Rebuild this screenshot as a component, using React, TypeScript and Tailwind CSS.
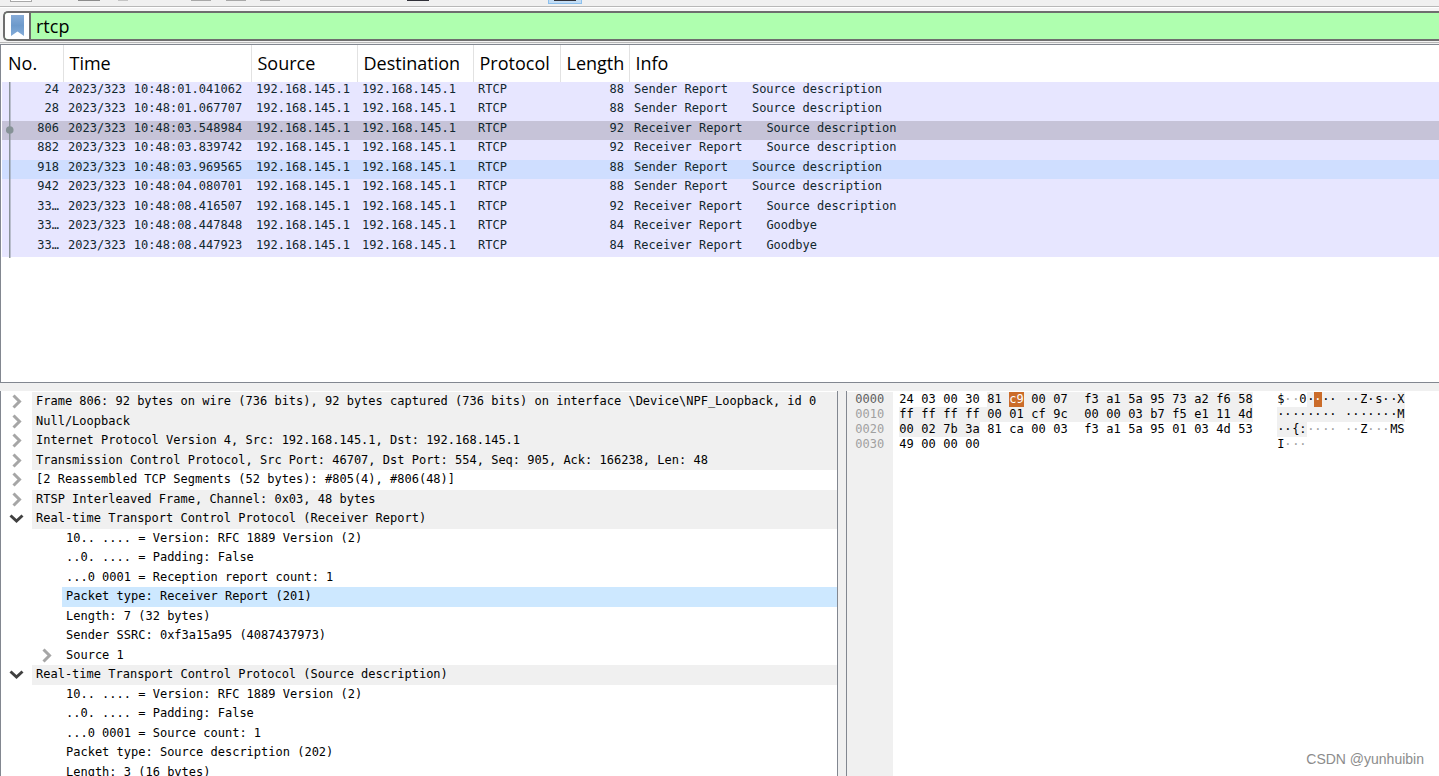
import clsx from 'clsx'

const columns = [
  { label: 'No.', width: 'w-[61px]' },
  { label: 'Time', width: 'w-[188px]' },
  { label: 'Source', width: 'w-[106px]' },
  { label: 'Destination', width: 'w-[116px]' },
  { label: 'Protocol', width: 'w-[87px]' },
  { label: 'Length', width: 'w-[69px]' },
  { label: 'Info', width: '' },
]

const packets = [
  { no: '24', time: '10:48:01.041062', length: 88, info: ['Sender Report', 'Source description'] },
  { no: '28', time: '10:48:01.067707', length: 88, info: ['Sender Report', 'Source description'] },
  { no: '806', time: '10:48:03.548984', length: 92, info: ['Receiver Report', 'Source description'], state: 'selected' },
  { no: '882', time: '10:48:03.839742', length: 92, info: ['Receiver Report', 'Source description'] },
  { no: '918', time: '10:48:03.969565', length: 88, info: ['Sender Report', 'Source description'], state: 'hover' },
  { no: '942', time: '10:48:04.080701', length: 88, info: ['Sender Report', 'Source description'] },
  { no: '33…', time: '10:48:08.416507', length: 92, info: ['Receiver Report', 'Source description'] },
  { no: '33…', time: '10:48:08.447848', length: 84, info: ['Receiver Report', 'Goodbye'] },
  { no: '33…', time: '10:48:08.447923', length: 84, info: ['Receiver Report', 'Goodbye'] },
]

type Node = { text: string; level: 0 | 1; arrow?: 'closed' | 'open'; tone?: 'gray' | 'blue' }

const nodes: Node[] = [
  { text: 'Frame 806: 92 bytes on wire (736 bits), 92 bytes captured (736 bits) on interface \\Device\\NPF_Loopback, id 0', level: 0, arrow: 'closed', tone: 'gray' },
  { text: 'Null/Loopback', level: 0, arrow: 'closed', tone: 'gray' },
  { text: 'Internet Protocol Version 4, Src: 192.168.145.1, Dst: 192.168.145.1', level: 0, arrow: 'closed', tone: 'gray' },
  { text: 'Transmission Control Protocol, Src Port: 46707, Dst Port: 554, Seq: 905, Ack: 166238, Len: 48', level: 0, arrow: 'closed', tone: 'gray' },
  { text: '[2 Reassembled TCP Segments (52 bytes): #805(4), #806(48)]', level: 0, arrow: 'closed' },
  { text: 'RTSP Interleaved Frame, Channel: 0x03, 48 bytes', level: 0, arrow: 'closed', tone: 'gray' },
  { text: 'Real-time Transport Control Protocol (Receiver Report)', level: 0, arrow: 'open', tone: 'gray' },
  { text: '10.. .... = Version: RFC 1889 Version (2)', level: 1 },
  { text: '..0. .... = Padding: False', level: 1 },
  { text: '...0 0001 = Reception report count: 1', level: 1 },
  { text: 'Packet type: Receiver Report (201)', level: 1, tone: 'blue' },
  { text: 'Length: 7 (32 bytes)', level: 1 },
  { text: 'Sender SSRC: 0xf3a15a95 (4087437973)', level: 1 },
  { text: 'Source 1', level: 1, arrow: 'closed' },
  { text: 'Real-time Transport Control Protocol (Source description)', level: 0, arrow: 'open', tone: 'gray' },
  { text: '10.. .... = Version: RFC 1889 Version (2)', level: 1 },
  { text: '..0. .... = Padding: False', level: 1 },
  { text: '...0 0001 = Source count: 1', level: 1 },
  { text: 'Packet type: Source description (202)', level: 1 },
  { text: 'Length: 3 (16 bytes)', level: 1 },
]

const offsets = ['0000', '0010', '0020', '0030']

// from/to bound the bytes that belong to the current protocol
const hexRows = [
  { bytes: '24 03 00 30 81 c9 00 07 f3 a1 5a 95 73 a2 f6 58', ascii: '$··0······Z·s··X', from: 4, to: 16, picked: 5 },
  { bytes: 'ff ff ff ff 00 01 cf 9c 00 00 03 b7 f5 e1 11 4d', ascii: '···············M', from: 0, to: 16, picked: -1 },
  { bytes: '00 02 7b 3a 81 ca 00 03 f3 a1 5a 95 01 03 4d 53', ascii: '··{:······Z···MS', from: 0, to: 4, picked: -1 },
  { bytes: '49 00 00 00', ascii: 'I···', from: 0, to: 0, picked: -1 },
]

const Arrow = ({ open }: { open: boolean }) =>
  open ? (
    <svg width="15" height="15" viewBox="0 0 15 15" fill="none" stroke="#404040" strokeWidth="3">
      <path d="M1.5 4.5 7.5 10 13.5 4.5" />
    </svg>
  ) : (
    <svg width="15" height="15" viewBox="0 0 15 15" fill="none" stroke="#a6a6a6" strokeWidth="3">
      <path d="M4.5 1.5 10.5 7.5 4.5 13.5" />
    </svg>
  )

const Toolbar = () => (
  <div className="flex h-[7px] shrink-0 items-start border-b border-[#b8b8b8] bg-[#f0f0f0]">
    <div className="ml-[10px] h-[2px] w-[22px] border-x border-b border-[#a8a8a8] bg-white" />
    <div className="ml-[46px] h-px w-[22px] bg-[#8c8c8c]" />
    <div className="ml-[18px] h-px w-[10px] bg-[#c4c4c4]" />
    <div className="ml-[63px] h-px w-5 bg-[#a8a8a8]" />
    <div className="ml-[15px] h-px w-5 bg-[#a8a8a8]" />
    <div className="ml-[14px] h-px w-5 bg-[#a8a8a8]" />
    <div className="ml-[127px] h-px w-[22px] bg-[#303038]" />
    <div className="ml-[119px] flex h-1 w-[34px] justify-center border-x border-b border-[#8cc0ee] bg-[#c2dcf3]">
      <div className="h-px w-[22px] bg-[#303038]" />
    </div>
  </div>
)

const FilterBar = () => (
  <div className="shrink-0 border-t border-b border-t-white border-b-[#b8b8b8] bg-[#f4f4f4] pt-[3px] pb-px pl-[3px]">
    <div className="flex h-[30px] rounded-l-[5px] border-y-2 border-l-2 border-t-[#6e6e6e] border-b-[#6e6e6e] border-l-[#6e6e6e] bg-[#afffaf]">
      <button type="button" aria-label="Filter bookmarks" className="flex w-[26px] shrink-0 items-center justify-center rounded-l-[3px] border-r-2 border-[#6e6e6e] bg-white">
        <svg width="13" height="22" viewBox="0 0 13 22">
          <defs>
            <linearGradient id="bookmark" x1="0" y1="0" x2="0" y2="1">
              <stop offset="0" stopColor="#86abd8" />
              <stop offset="0.5" stopColor="#6d9acb" />
              <stop offset="1" stopColor="#84acd9" />
            </linearGradient>
          </defs>
          <path d="M0 0H13V21L6.5 16.5 0 21Z" fill="url(#bookmark)" />
        </svg>
      </button>
      <input
        aria-label="Display filter"
        defaultValue="rtcp"
        className="min-w-0 flex-1 bg-transparent pl-[5px] font-['Open_Sans',sans-serif] text-[18px] leading-[26px] text-black outline-none"
      />
    </div>
  </div>
)

const PacketList = () => (
  <section className="relative min-h-0 flex-[337] overflow-hidden border-y border-l border-[#828790] bg-white pl-px">
    <table className="w-full table-fixed border-collapse">
      <thead>
        <tr className="h-[37px] font-['Open_Sans',sans-serif] text-[18px] text-black">
          {columns.map((c) => (
            <th key={c.label} className={clsx('overflow-hidden border-r border-[#e2e2e2] p-0 pl-[6px] text-left font-normal last:border-r-0', c.width)}>
              {c.label}
            </th>
          ))}
        </tr>
      </thead>
      <tbody className="font-['DejaVu_Sans_Mono',monospace] text-[12px] leading-[15px] whitespace-pre text-[#12272e]">
        {packets.map((p, i) => (
          <tr
            key={i}
            className={clsx(
              'align-top odd:h-[19px] even:h-[20px]',
              p.state === 'selected' ? 'bg-[#c6c3d8]' : p.state === 'hover' ? 'bg-[#cfdeff]' : 'bg-[#e7e6ff]',
            )}
          >
            <td className="p-0 pr-1 text-right">{p.no}</td>
            <td className="p-0 pl-[5px]">
              <span className="mr-2">2023/323</span>
              {p.time}
            </td>
            <td className="p-0 pl-[5px]">192.168.145.1</td>
            <td className="p-0 pl-[5px]">192.168.145.1</td>
            <td className="p-0 pl-[5px]">RTCP</td>
            <td className="p-0 pr-[5px] text-right">{p.length}</td>
            <td className="p-0 pl-[5px]">
              {p.info[0]}
              <span className="ml-6">{p.info[1]}</span>
            </td>
          </tr>
        ))}
      </tbody>
    </table>
    {/* conversation line over the No. column */}
    <svg className="absolute top-[37px] left-1" width="9" height="176" viewBox="0 0 9 176">
      <path d="M4.75 0V176" stroke="#8b949b" strokeWidth="1.5" />
      <circle cx="4.75" cy="48" r="3.8" fill="#869296" />
    </svg>
  </section>
)

const DetailsTree = () => (
  <section className="min-w-0 flex-[838] overflow-hidden border-x border-[#828790] bg-white pt-px">
    <ul className="font-['DejaVu_Sans_Mono',monospace] text-[12px] leading-[19px] whitespace-pre text-black">
      {nodes.map((n, i) => (
        <li key={i} className={clsx('flex odd:h-[20px] even:h-[19px]', n.level === 1 && 'pl-[30px]')}>
          <div className="flex h-[19px] w-[31px] shrink-0 items-center justify-center">
            {n.arrow && (
              <button type="button" aria-label={n.arrow === 'open' ? 'Collapse' : 'Expand'}>
                <Arrow open={n.arrow === 'open'} />
              </button>
            )}
          </div>
          <div className={clsx('min-w-0 flex-1 overflow-hidden pl-1', n.tone === 'gray' && 'bg-[#f0f0f0]', n.tone === 'blue' && 'bg-[#cde8ff]')}>
            {n.text}
          </div>
        </li>
      ))}
    </ul>
  </section>
)

const BytesPane = () => (
  <section className="flex min-w-0 flex-[593] overflow-hidden border-l border-[#828790] bg-white pt-px font-['DejaVu_Sans_Mono',monospace] text-[12px] leading-[15px] whitespace-pre text-black">
    <div className="w-[46px] shrink-0 bg-[#f0f0f0] pl-2 text-[#a0a0a0]">
      {offsets.map((o) => (
        <div key={o} className="first:text-[#606060]">{o}</div>
      ))}
    </div>
    <div className="w-[384px] shrink-0 pl-[6px]">
      {hexRows.map((r, y) => (
        <div key={y} className="flex h-[15px]">
          {r.bytes.split(' ').map((b, x) => {
            const on = x >= r.from && x < r.to
            // the band stops right after its last byte
            const last = x === r.to - 1
            return (
              <div key={x} className={clsx(x === 7 ? 'w-[31px]' : 'w-[22px]', on && !last && 'bg-[#f0f0f0]')}>
                <span className={clsx('block w-[15px]', x === r.picked && 'bg-[#cb6c2a] text-white', last && 'bg-[#f0f0f0]')}>{b}</span>
              </div>
            )
          })}
        </div>
      ))}
    </div>
    <div className="shrink-0">
      {hexRows.map((r, y) => (
        <div key={y} className="flex h-[15px]">
          {r.ascii.split('').map((ch, x) => {
            const on = x >= r.from && x < r.to
            const picked = x === r.picked
            return (
              <span
                key={x}
                className={clsx(
                  x === 8 ? 'w-[15px] text-right' : 'odd:w-[7px] even:w-[8px]',
                  picked && 'bg-[#cb6c2a] text-white',
                  on && !picked && 'bg-[#f0f0f0]',
                  ch === '·' && !on && 'text-[#a0a0a0]',
                )}
              >
                {ch}
              </span>
            )
          })}
        </div>
      ))}
    </div>
  </section>
)

export default function App() {
  return (
    <div className="relative flex h-screen flex-col overflow-hidden bg-[#f0f0f0]">
      <Toolbar />
      <FilterBar />
      <div className="h-px shrink-0" />
      <PacketList />
      <main className="flex min-h-0 flex-[385] gap-2 pt-2">
        <DetailsTree />
        <BytesPane />
      </main>
      <div className="absolute right-[15px] bottom-[7px] font-['Liberation_Sans',sans-serif] text-[14px] leading-5 text-[#8c8c8c]">
        CSDN @yunhuibin
      </div>
    </div>
  )
}
